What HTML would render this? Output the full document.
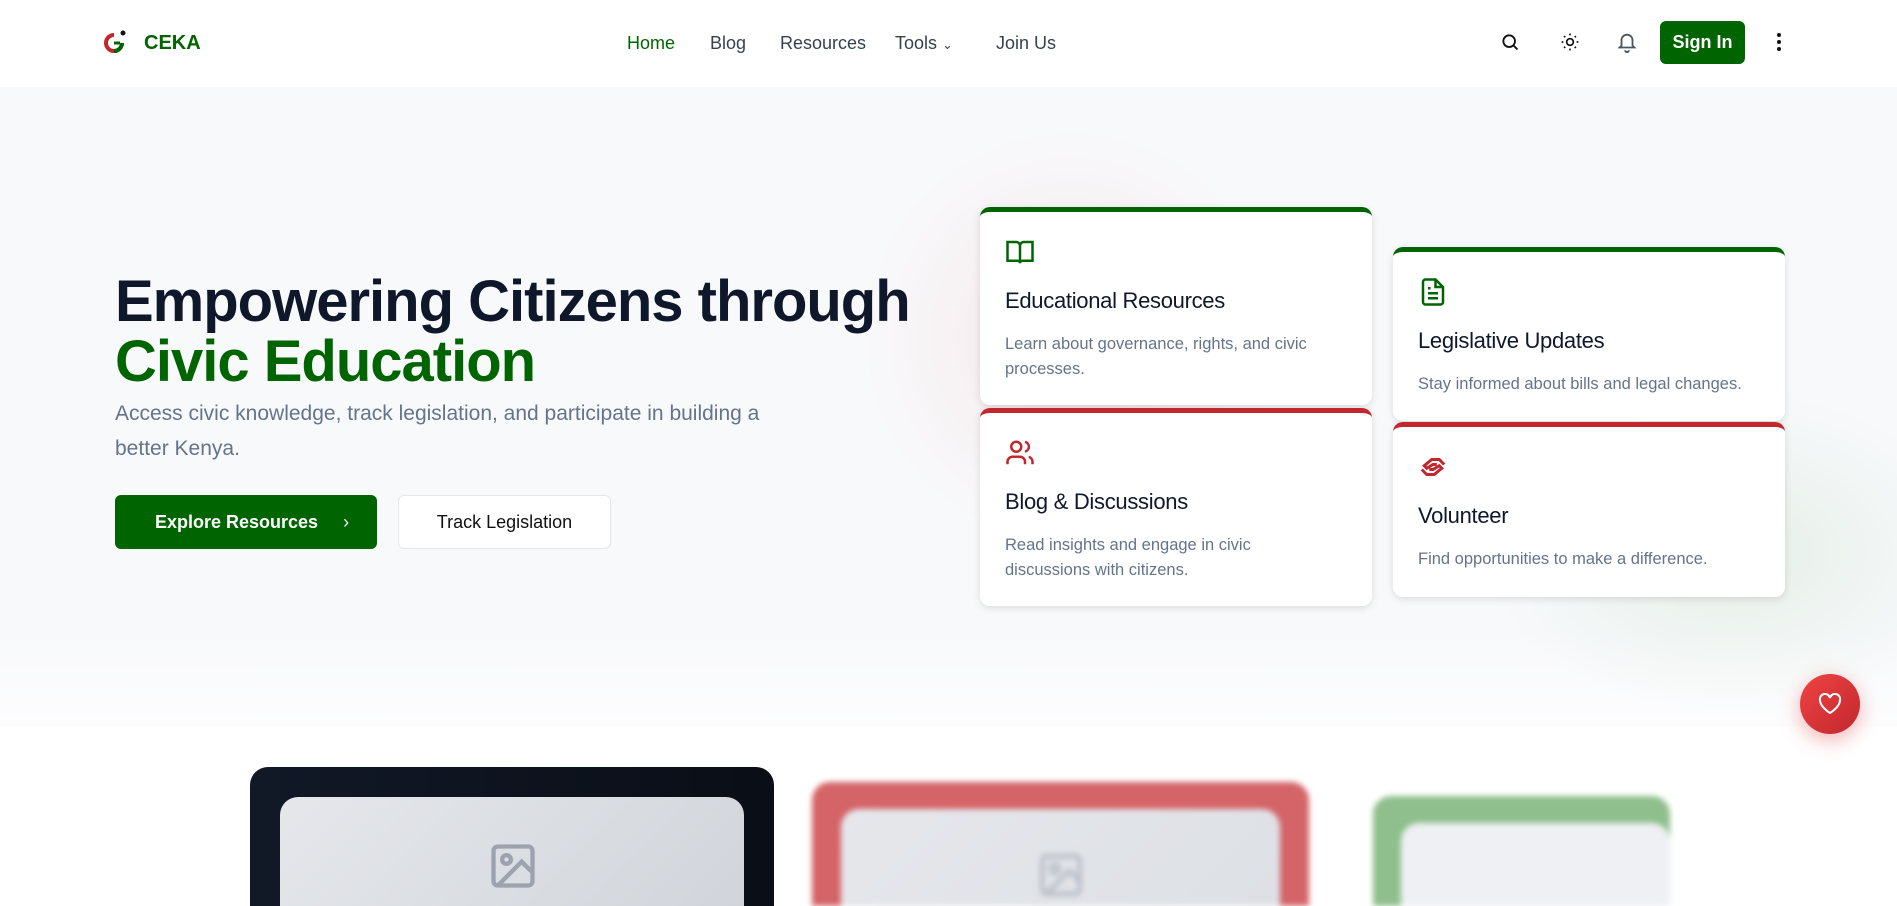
<!DOCTYPE html>
<html style="overflow:hidden;height:906px"><head><meta charset="utf-8"><style>
*{box-sizing:border-box;margin:0;padding:0}
body{width:1897px;height:906px;overflow:hidden;font-family:"Liberation Sans",sans-serif;background:#fff;position:relative}
.nav{position:absolute;top:0;left:0;width:1897px;height:87px;background:#fff;z-index:5}
.nav a{position:absolute;top:33px;font-size:18px;color:#374151;text-decoration:none}
.hero{position:absolute;top:87px;left:0;width:1897px;height:640px;overflow:hidden;background:linear-gradient(180deg,#f8f9fb 85%,#fdfdfe)}
.blob1{position:absolute;left:860px;top:40px;width:420px;height:420px;border-radius:50%;background:radial-gradient(circle,rgba(220,80,80,.10),rgba(220,80,80,0) 70%)}
.blob2{position:absolute;left:1480px;top:300px;width:500px;height:330px;border-radius:50%;background:radial-gradient(ellipse,rgba(60,150,60,.10),rgba(60,150,60,0) 70%)}
h1{position:absolute;left:115px;top:272px;font-size:58px;line-height:60px;font-weight:bold;color:#0f172a;letter-spacing:-1px;z-index:2}
h1 span{color:#006400}
.lead{position:absolute;left:115px;top:396px;width:700px;font-size:21px;line-height:35px;color:#64748b;z-index:2}
.btn1{position:absolute;left:115px;top:495px;width:262px;height:54px;background:#006400;border-radius:6px;color:#fff;font-size:18px;font-weight:bold;line-height:54px;padding-left:40px;z-index:2}
.btn2{position:absolute;left:398px;top:495px;width:213px;height:54px;background:#fff;border:1px solid #e2e8f0;border-radius:6px;color:#111;font-size:18px;line-height:52px;text-align:center;z-index:2}
.card{position:absolute;width:392px;background:#fff;border-radius:10px;box-shadow:0 2px 8px rgba(0,0,0,.12);border-top:5px solid #006400;padding:25px 45px 0 25px;z-index:3}
.card.w{padding-right:10px}
.card.r{border-top-color:#c1272d}
.card h3{font-size:22px;font-weight:normal;color:#0f172a;margin-top:16px;letter-spacing:-.3px}
.card p{font-size:16.5px;line-height:25px;color:#64748b;margin-top:18px}
.bot{position:absolute;border-radius:18px 18px 0 0}
</style></head><body>
<div class="hero"><div class="blob1"></div><div class="blob2"></div></div>
<div class="nav">
<svg style="position:absolute;left:103px;top:30px" width="24" height="24" viewBox="0 0 24 24"><path d="M11 5a8 8 0 1 0 8 8" fill="none" stroke="#c1272d" stroke-width="4"/><path d="M19 13a8 8 0 0 1-8 8" fill="none" stroke="#006400" stroke-width="4"/><path d="M11 13h6" stroke="#006400" stroke-width="3"/><circle cx="20" cy="3" r="2.5" fill="#111"/></svg>
<div style="position:absolute;left:144px;top:32px;font-size:20px;font-weight:bold;color:#006400">CEKA</div>
<a style="left:627px;color:#006400">Home</a><a style="left:710px">Blog</a><a style="left:780px">Resources</a><a style="left:895px">Tools <span style="font-size:13px">&#8964;</span></a><a style="left:996px">Join Us</a>
<svg style="position:absolute;left:1500px;top:32px" width="20" height="20" viewBox="0 0 24 24" fill="none" stroke="#111" stroke-width="2.2"><circle cx="11" cy="11" r="7"/><path d="M16 16l5 5"/></svg>
<svg style="position:absolute;left:1560px;top:32px" width="20" height="20" viewBox="0 0 24 24" fill="none" stroke="#111" stroke-width="2"><circle cx="12" cy="12" r="4"/><path d="M12 2v2M12 20v2M2 12h2M20 12h2M4.9 4.9l1.4 1.4M17.7 17.7l1.4 1.4M4.9 19.1l1.4-1.4M17.7 6.3l1.4-1.4"/></svg>
<svg style="position:absolute;left:1616px;top:30px" width="22" height="24" viewBox="0 0 24 24" fill="none" stroke="#4b5563" stroke-width="2"><path d="M6 16V10a6 6 0 0 1 12 0v6l2 2H4z"/><path d="M10 21a2 2 0 0 0 4 0"/></svg>
<div style="position:absolute;left:1660px;top:21px;width:85px;height:43px;background:#006400;border-radius:6px;color:#fff;font-weight:bold;font-size:18px;line-height:43px;text-align:center">Sign In</div>
<svg style="position:absolute;left:1773px;top:32px" width="12" height="20" viewBox="0 0 12 20"><circle cx="6" cy="3" r="2" fill="#111"/><circle cx="6" cy="10" r="2" fill="#111"/><circle cx="6" cy="17" r="2" fill="#111"/></svg>
</div>
<h1>Empowering Citizens through<br><span>Civic Education</span></h1>
<div class="lead">Access civic knowledge, track legislation, and participate in building a better Kenya.</div>
<div class="btn1">Explore Resources <span style="margin-left:20px;font-weight:normal">&#8250;</span></div>
<div class="btn2">Track Legislation</div>

<div class="card" style="left:980px;top:207px;height:198px">
<svg width="30" height="30" viewBox="0 0 24 24" fill="none" stroke="#006400" stroke-width="2"><path d="M2 4h7a3 3 0 0 1 3 3v14a2 2 0 0 0-2-2H2zM22 4h-7a3 3 0 0 0-3 3v14a2 2 0 0 1 2-2h8z"/></svg>
<h3>Educational Resources</h3><p>Learn about governance, rights, and civic processes.</p></div>
<div class="card r" style="left:980px;top:408px;height:198px">
<svg width="30" height="30" viewBox="0 0 24 24" fill="none" stroke="#c1272d" stroke-width="2"><circle cx="9" cy="7" r="4"/><path d="M2 21v-2a4 4 0 0 1 4-4h6a4 4 0 0 1 4 4v2M16 3.1a4 4 0 0 1 0 7.8M22 21v-2a4 4 0 0 0-3-3.9"/></svg>
<h3>Blog &amp; Discussions</h3><p>Read insights and engage in civic discussions with citizens.</p></div>
<div class="card w" style="left:1393px;top:247px;height:174px">
<svg width="30" height="30" viewBox="0 0 24 24" fill="none" stroke="#006400" stroke-width="2"><path d="M14 2H6a2 2 0 0 0-2 2v16a2 2 0 0 0 2 2h12a2 2 0 0 0 2-2V8z"/><path d="M14 2v6h6M16 13H8M16 17H8M10 9H8"/></svg>
<h3>Legislative Updates</h3><p>Stay informed about bills and legal changes.</p></div>
<div class="card r w" style="left:1393px;top:422px;height:175px">
<svg width="30" height="30" viewBox="0 0 24 24" fill="none" stroke="#c1272d" stroke-width="2.4"><path d="M3 14l4 4h6l6-5-2-2-5 3H9M21 10l-4-4h-6L5 11l2 2 5-3h3"/></svg>
<h3>Volunteer</h3><p>Find opportunities to make a difference.</p></div>

<div style="position:absolute;left:1800px;top:674px;width:60px;height:60px;border-radius:50%;background:linear-gradient(135deg,#ef4444,#c1272d);box-shadow:0 6px 20px rgba(220,38,38,.35);z-index:4"><svg style="position:absolute;left:18px;top:19px" width="24" height="22" viewBox="0 0 24 22" fill="none" stroke="#fff" stroke-width="2"><path d="M12 20S2 14 2 7a5 5 0 0 1 10-2 5 5 0 0 1 10 2c0 7-10 13-10 13z"/></svg></div>

<div style="position:absolute;left:0;top:740px;width:1897px;height:166px;overflow:hidden">
<div class="bot" style="left:250px;top:27px;width:524px;height:139px;background:linear-gradient(90deg,#111827,#0a0e16)"></div>
<div class="bot" style="left:280px;top:57px;width:464px;height:109px;background:linear-gradient(135deg,#e5e7eb,#d1d5db)"></div>
<svg style="position:absolute;left:487px;top:100px" width="52" height="52" viewBox="0 0 24 24" fill="none" stroke="#9ca3af" stroke-width="2"><rect x="3" y="3" width="18" height="18" rx="2"/><circle cx="9" cy="9" r="2"/><path d="M21 15l-5-5L5 21"/></svg>
<div style="position:absolute;left:0;top:0;width:1670px;height:166px;overflow:hidden;filter:blur(3px)">
<div class="bot" style="left:812px;top:42px;width:497px;height:124px;background:#d46467"></div>
<div class="bot" style="left:841px;top:69px;width:439px;height:97px;background:linear-gradient(135deg,#e5e7eb,#dde0e5)"></div>
<svg style="position:absolute;left:1036px;top:110px" width="50" height="50" viewBox="0 0 24 24" fill="none" stroke="#b7bcc5" stroke-width="2"><rect x="3" y="3" width="18" height="18" rx="2"/><circle cx="9" cy="9" r="2"/><path d="M21 15l-5-5L5 21"/></svg>
<div class="bot" style="left:1373px;top:56px;width:297px;height:110px;background:#8fbf8c"></div>
<div class="bot" style="left:1401px;top:83px;width:269px;height:83px;background:#eef0f3"></div>
</div>
</div>
</body></html>
